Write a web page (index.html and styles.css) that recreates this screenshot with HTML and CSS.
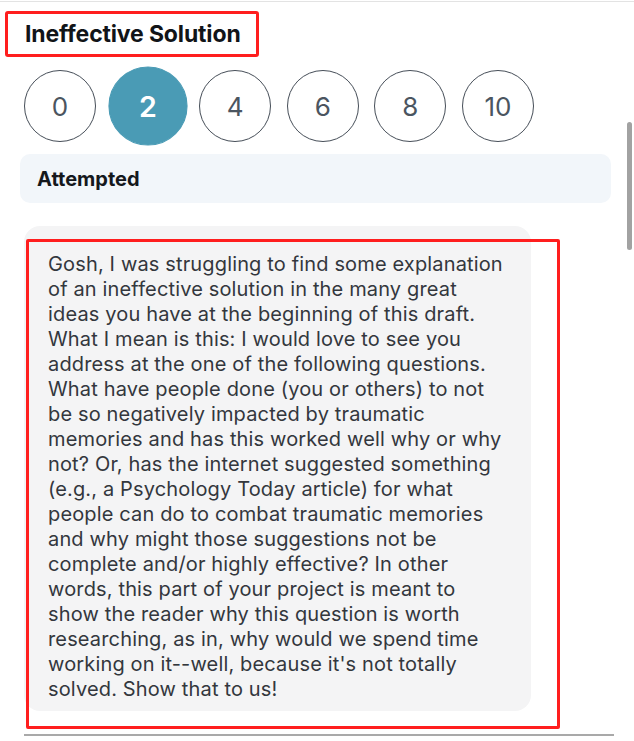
FILE: index.html
```html
<!DOCTYPE html>
<html>
<head>
<meta charset="utf-8">
<link rel="stylesheet" href="styles.css">
</head>
<body>
<div class="page">
  <div class="topline"></div>
  <h2 class="title"><span class="title-box">Ineffective Solution</span></h2>
  <div class="scale">
    <div class="dot">0</div>
    <div class="dot active">2</div>
    <div class="dot">4</div>
    <div class="dot">6</div>
    <div class="dot">8</div>
    <div class="dot">10</div>
  </div>
  <div class="status">Attempted</div>
  <div class="comment">
    <p class="comment-text">Gosh, I was struggling to find some explanation of an ineffective solution in the many great ideas you have at the beginning of this draft. What I mean is this: I would love to see you address at the one of the following questions. What have people done (you or others) to not be so negatively impacted by traumatic memories and has this worked well why or why not? Or, has the internet suggested something (e.g., a Psychology Today article) for what people can do to combat traumatic memories and why might those suggestions not be complete and/or highly effective? In other words, this part of your project is meant to show the reader why this question is worth researching, as in, why would we spend time working on it--well, because it's not totally solved. Show that to us!</p>
    <div class="highlight"></div>
  </div>
  <div class="divider"></div>
  <div class="scrollbar"></div>
</div>
</body>
</html>
```

FILE: styles.css
```css
html, body {
  margin: 0;
  padding: 0;
  background: #ffffff;
}
body {
  font-family: Inter, "Noto Sans", "Liberation Sans", sans-serif;
  color: #1f2328;
}
.page {
  position: relative;
  width: 634px;
  height: 741px;
  overflow: hidden;
}
.topline {
  height: 1px;
  margin-top: 1px;
  background: #e3e3e3;
}
.title {
  margin: 9px 0 0 5px;
  padding: 0;
  font-size: 23px;
  font-weight: 700;
  line-height: 40px;
}
.title-box {
  display: inline-block;
  border: 3px solid #ff1e1e;
  border-radius: 3px;
  padding: 0 15px 0 17px;
  color: #111418;
  letter-spacing: -0.15px;
}
.scale {
  display: flex;
  gap: 15.6px;
  margin: 13px 0 0 24px;
}
.dot {
  width: 72px;
  height: 72px;
  box-sizing: border-box;
  border: 1.5px solid #464e58;
  border-radius: 50%;
  display: flex;
  align-items: center;
  justify-content: center;
  font-size: 26px;
  font-weight: 400;
  color: #4b5560;
}
.dot.active {
  background: #4a9bb5;
  border-color: #4a9bb5;
  color: #ffffff;
  font-weight: 600;
  transform: scale(1.1);
}
.status {
  margin: 12px 23px 0 20px;
  height: 49px;
  box-sizing: border-box;
  padding-left: 17px;
  display: flex;
  align-items: center;
  background: #f2f6fa;
  border-radius: 10px;
  font-size: 20px;
  font-weight: 700;
  color: #15181c;
}
.comment {
  position: relative;
  margin: 23px 0 0 24px;
  width: 507px;
  box-sizing: border-box;
  padding: 26px 24px 9px 24px;
  background: #f4f4f5;
  border-radius: 16px;
}
.comment-text {
  margin: 0;
  font-size: 20px;
  letter-spacing: 0.15px;
  line-height: 25px;
  color: #33373d;
}
.highlight {
  position: absolute;
  left: 2px;
  top: 13px;
  width: 534px;
  height: 490px;
  box-sizing: border-box;
  border: 3px solid #ff1e1e;
  border-radius: 2px;
}
.divider {
  margin: 23px 20px 0 24px;
  height: 2px;
  background: #a9a9a9;
}
.scrollbar {
  position: absolute;
  left: 627px;
  top: 122px;
  width: 5px;
  height: 128px;
  border-radius: 3px;
  background: #a2a2a2;
}
```
